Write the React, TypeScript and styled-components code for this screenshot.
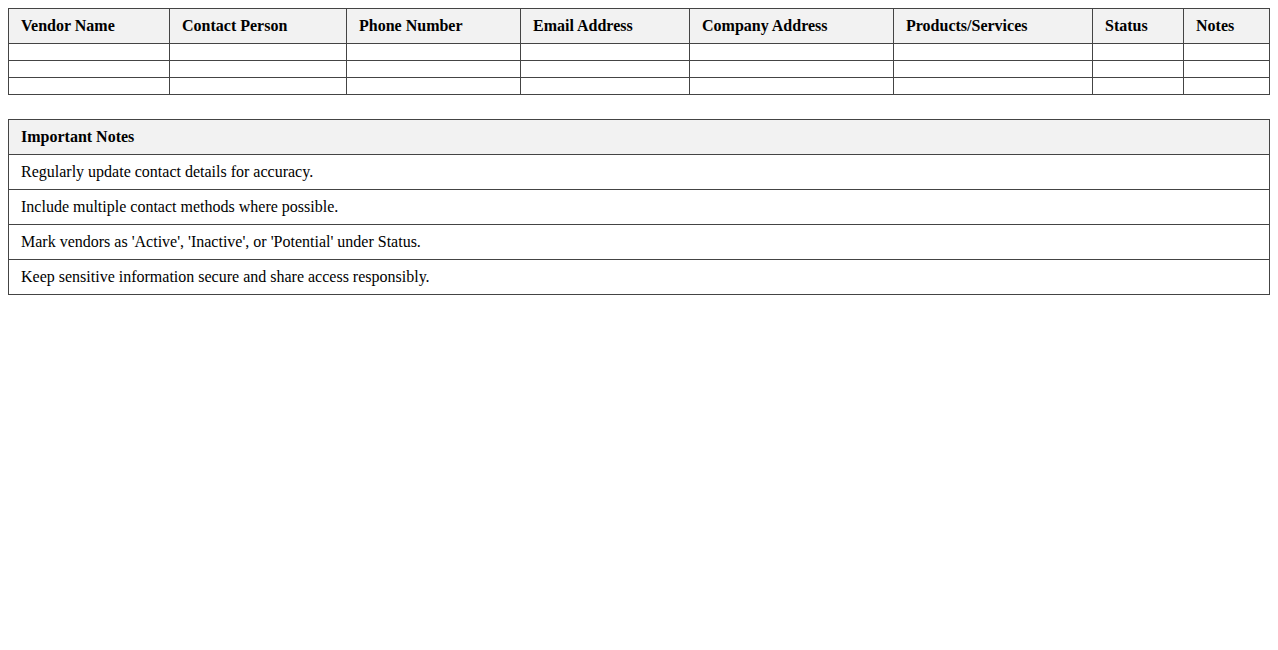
import React from "react";
import styled, { createGlobalStyle } from "styled-components";

const Global = createGlobalStyle`
  body { margin: 8px; font-family: "Liberation Serif", "Times New Roman", serif; font-size: 16px; color: #000; background: #fff; }
`;

const Table = styled.table<{ $gap?: boolean }>`
  width: 100%;
  border-collapse: collapse;
  table-layout: fixed;
  margin-top: ${(p) => (p.$gap ? "24px" : "0")};
`;

const Th = styled.th`
  background: #f2f2f2;
  border: 1px solid #444;
  padding: 8px 12px;
  text-align: left;
  font-weight: bold;
`;

const Td = styled.td`
  border: 1px solid #444;
  padding: 8px 12px;
  text-align: left;
`;

const cols = [161, 177, 174, 169, 204, 199, 91, 86];
const headers = ["Vendor Name", "Contact Person", "Phone Number", "Email Address", "Company Address", "Products/Services", "Status", "Notes"];
const notes = [
  "Regularly update contact details for accuracy.",
  "Include multiple contact methods where possible.",
  "Mark vendors as 'Active', 'Inactive', or 'Potential' under Status.",
  "Keep sensitive information secure and share access responsibly.",
];

export default function App() {
  return (
    <>
      <Global />
      <Table>
        <colgroup>
          {cols.map((w, i) => <col key={i} style={{ width: w }} />)}
        </colgroup>
        <thead>
          <tr>{headers.map((h) => <Th key={h}>{h}</Th>)}</tr>
        </thead>
        <tbody>
          {[0, 1, 2].map((r) => (
            <tr key={r}>{headers.map((h) => <Td key={h}></Td>)}</tr>
          ))}
        </tbody>
      </Table>
      <Table $gap>
        <thead><tr><Th>Important Notes</Th></tr></thead>
        <tbody>
          {notes.map((n) => <tr key={n}><Td>{n}</Td></tr>)}
        </tbody>
      </Table>
    </>
  );
}
